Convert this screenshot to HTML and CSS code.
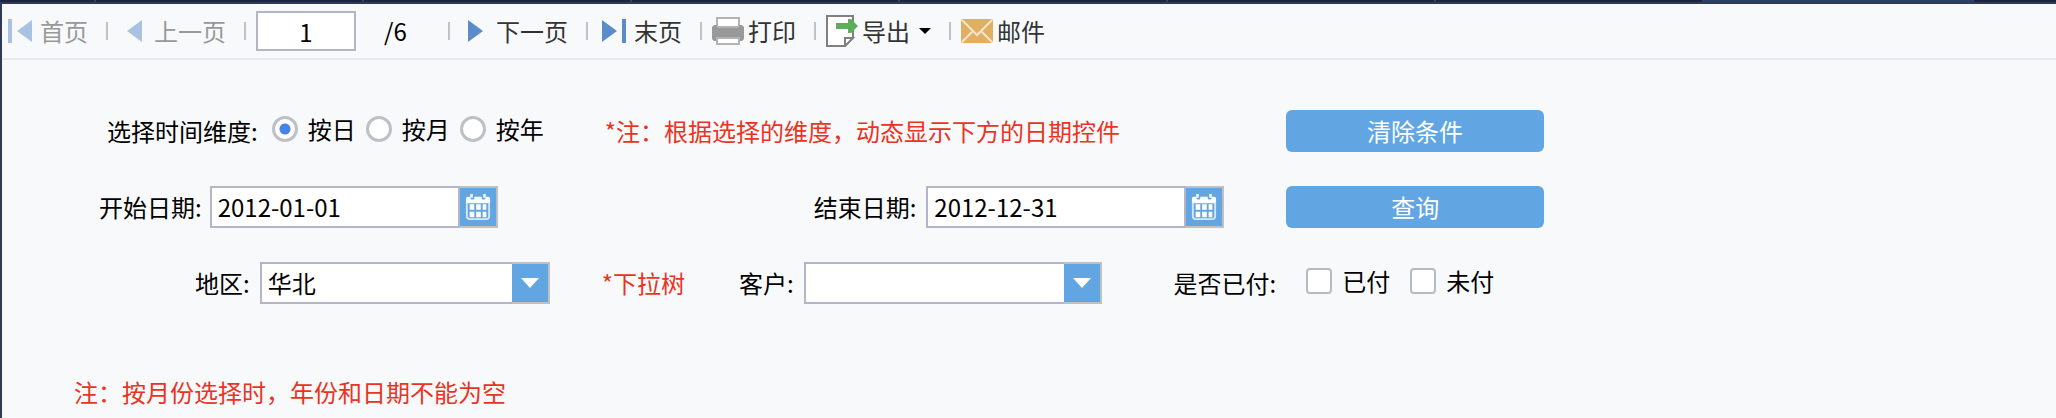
FILE: index.html
```html
<!DOCTYPE html>
<html lang="zh-CN">
<head>
  <meta charset="utf-8">
  <meta name="viewport" content="width=device-width,initial-scale=1.0">
  <title>订单查询</title>
  <link rel="stylesheet" href="styles.css">
</head>
<body>
  <div class="tabs">
    <span class="tab first"></span>
    <span class="tab"></span>
    <span class="tab"></span>
    <span class="tab"></span>
    <span class="tab"></span>
    <span class="tab"></span>
    <span class="tab"></span>
    <span class="tab active"></span>
  </div>
  <div class="report">
    <!-- toolbar -->
    <div class="toolbar">
      <button class="tool" disabled>
        <svg class="icon pale" viewBox="0 0 32 32"><path d="M4 4h4v24H4zM28 5v22L13 16z"/></svg>
        首页
      </button>
      <span class="sep"></span>
      <button class="tool" disabled>
        <svg class="icon pale" viewBox="0 0 32 32"><path d="M24 5v22L9 16z"/></svg>
        上一页
      </button>
      <span class="sep"></span>
      <input class="page" type="text" value="1" aria-label="页码">
      <span class="total">/6</span>
      <span class="sep"></span>
      <button class="tool">
        <svg class="icon blue" viewBox="0 0 32 32"><path d="M8 5v22l15-11z"/></svg>
        下一页
      </button>
      <span class="sep"></span>
      <button class="tool">
        <svg class="icon blue" viewBox="0 0 32 32"><path d="M4 5v22l15-11zM24 4h4v24h-4z"/></svg>
        末页
      </button>
      <span class="sep"></span>
      <button class="tool">
        <svg class="icon" viewBox="0 0 32 32">
          <path d="M5 3h22v9H5z" fill="#fff" stroke="#b3b3b3" stroke-width="2"/>
          <path d="M2 10h3v3h22v-3h3l2 2v12l-2 2H2l-2-2V12z" fill="#999"/>
          <path d="M5 23h22v6H5z" fill="#fff" stroke="#b3b3b3" stroke-width="2"/>
        </svg>
        打印
      </button>
      <span class="sep"></span>
      <button class="tool">
        <svg class="icon" viewBox="0 0 32 32">
          <path d="M1 1h26v21l-8 9H1z" fill="#fff" stroke="#808080" stroke-width="2"/>
          <path d="M19 31v-8h8z" fill="#fff" stroke="#808080" stroke-width="2"/>
          <path d="M10 8h12V4h3l7 7-7 7h-3v-4H10z" fill="#5dae5c"/>
        </svg>
        导出
        <svg class="caret" viewBox="0 0 12 6"><path d="M0 0h12L6 6z"/></svg>
      </button>
      <span class="sep"></span>
      <button class="tool">
        <svg class="icon" viewBox="0 0 32 32">
          <rect y="4" width="32" height="24" rx="2" fill="#e2ae62"/>
          <path d="M1 5l15 15L31 5M1 27l11-11M31 27L20 16" fill="none" stroke="#f6e5cb" stroke-width="2"/>
        </svg>
        邮件
      </button>
    </div>

    <!-- query form -->
    <form class="query">
      <div class="row unit">
        <span class="label">选择时间维度:</span>
        <div class="choices">
          <label class="choice"><input type="radio" name="unit" checked>按日</label>
          <label class="choice"><input type="radio" name="unit">按月</label>
          <label class="choice"><input type="radio" name="unit">按年</label>
        </div>
        <span class="tip">*注：根据选择的维度，动态显示下方的日期控件</span>
        <button class="btn reset" type="reset">清除条件</button>
      </div>

      <div class="row dates">
        <label class="label" for="start">开始日期:</label>
        <div class="field start">
          <input id="start" type="text" value="2012-01-01">
          <button class="pick" type="button" aria-label="选择开始日期">
            <svg viewBox="0 0 28 30">
              <path d="M3 4h3v2q2 2 4 0V4h8v2q2 2 4 0V4h3q2 0 2 2v5H1V6q0-2 2-2z" fill="#fff"/>
              <path d="M7 1v4M21 1v4" stroke="#e5f1fb" stroke-width="3"/>
              <path d="M2 10v15q0 3 3 3h18q3 0 3-3V10" fill="none" stroke="#d3e7f8" stroke-width="2"/>
              <path d="M5 12h5v6H5zM12 12h5v6h-5zM19 12h4v6h-4zM5 20h5v6H5zM12 20h5v6h-5zM19 20h4v6h-4z" fill="#fff"/>
            </svg>
          </button>
        </div>
        <label class="label" for="end">结束日期:</label>
        <div class="field end">
          <input id="end" type="text" value="2012-12-31">
          <button class="pick" type="button" aria-label="选择结束日期">
            <svg viewBox="0 0 28 30">
              <path d="M3 4h3v2q2 2 4 0V4h8v2q2 2 4 0V4h3q2 0 2 2v5H1V6q0-2 2-2z" fill="#fff"/>
              <path d="M7 1v4M21 1v4" stroke="#e5f1fb" stroke-width="3"/>
              <path d="M2 10v15q0 3 3 3h18q3 0 3-3V10" fill="none" stroke="#d3e7f8" stroke-width="2"/>
              <path d="M5 12h5v6H5zM12 12h5v6h-5zM19 12h4v6h-4zM5 20h5v6H5zM12 20h5v6h-5zM19 20h4v6h-4z" fill="#fff"/>
            </svg>
          </button>
        </div>
        <button class="btn search" type="button">查询</button>
      </div>

      <div class="row filters">
        <label class="label" for="area">地区:</label>
        <div class="field area">
          <select id="area"><option>华北</option></select>
          <span class="drop"></span>
        </div>
        <span class="tip">*下拉树</span>
        <label class="label" for="customer">客户:</label>
        <div class="field customer">
          <select id="customer"><option></option></select>
          <span class="drop"></span>
        </div>
        <span class="label paid">是否已付:</span>
        <div class="choices checks">
          <label class="choice"><input type="checkbox">已付</label>
          <label class="choice"><input type="checkbox">未付</label>
        </div>
      </div>

      <p class="tip note">注：按月份选择时，年份和日期不能为空</p>
    </form>
  </div>
</body>
</html>
```
FILE: styles.css
```css
* {
  box-sizing: border-box;
}
body {
  margin: 0;
  min-height: 100vh;
  display: flex;
  flex-direction: column;
  background: #f7f9fb;
  color: #000;
  font: 24px/36px "Noto Sans CJK SC", sans-serif;
}
button, input, select {
  font: inherit;
  color: inherit;
  margin: 0;
}

/* bottom edge of the tab strip */
.tabs {
  display: flex;
  height: 4px;
  background: #1b2440;
  border-bottom: 2px solid #2e3a56;
  overflow: hidden;
}
.tab {
  flex: none;
  width: 268px;
  border-right: 2px solid #36415c;
}
.tab.first {
  width: 96px;
}
.tab.active {
  width: 270px;
  background: #2a3f68;
}

.report {
  flex: 1;
  border-left: 2px solid #2e3a56;
}

.toolbar {
  display: flex;
  align-items: center;
  padding: 7px 2px;
  border-bottom: 2px solid #e8eaed;
}
.tool {
  display: flex;
  align-items: center;
  gap: 4px;
  padding: 0;
  border: 0;
  background: none;
  color: #333;
  white-space: nowrap;
}
.tool:disabled {
  color: #999;
}
.icon {
  width: 32px;
  height: 32px;
}
.pale {
  fill: #aac2e2;
}
.blue {
  fill: #5b8cc9;
}
.caret {
  width: 12px;
  height: 6px;
  margin-left: 5px;
}
.sep {
  width: 2px;
  height: 18px;
  margin: 0 10px 0 18px;
  background: #c0c2c5;
}
.page {
  width: 100px;
  height: 40px;
  padding: 0;
  border: 2px solid #b5b5c9;
  background: #fff;
  text-align: center;
}
.total {
  width: 46px;
  margin-left: 28px;
}

.query {
  display: flex;
  flex-direction: column;
  gap: 34px;
  padding-top: 50px;
}
.row {
  display: flex;
  align-items: center;
  height: 42px;
  white-space: nowrap;
}
.unit {
  padding-left: 105px;
}
.dates {
  padding-left: 97px;
}
.filters {
  padding-left: 193px;
}
.tip {
  color: #ea3323;
}

.choices {
  display: flex;
  gap: 10px;
  margin-left: 14px;
  padding-bottom: 4px;
}
.checks {
  gap: 20px;
  margin-left: 30px;
}
.choice {
  display: flex;
  align-items: center;
  gap: 10px;
}
.choice input {
  appearance: none;
  width: 26px;
  height: 26px;
  border: 2px solid #b4bbc2;
  border-radius: 4px;
  background: #fff;
}
.choice input[type=radio] {
  border-width: 3px;
  border-color: #bcc1c6;
  border-radius: 50%;
}
.choice input[type=radio]:checked {
  background: radial-gradient(circle, #4682e8 5px, #fff 6px);
}
.choices + .tip {
  margin-left: 61px;
}

.btn {
  width: 258px;
  height: 42px;
  padding: 0;
  border: 0;
  border-radius: 6px;
  background: #61a6e2;
  color: #fff;
}
.reset {
  margin-left: 166px;
}
.search {
  margin-left: 62px;
}

.field {
  display: flex;
  position: relative;
  height: 42px;
  margin-left: 10px;
}
.field input, .field select {
  flex: 1;
  min-width: 0;
  padding: 0 6px;
  border: 2px solid #b5b5c9;
  border-radius: 0;
  background: #fff;
}
.field select {
  appearance: none;
}
.start {
  width: 288px;
  margin-left: 8px;
}
.start + .label {
  margin-left: 316px;
}
.end {
  width: 298px;
}
.area {
  width: 290px;
}
.area + .tip {
  margin-left: 52px;
}
.tip + .label {
  margin-left: 54px;
}
.customer {
  width: 298px;
}
.paid {
  margin-left: 72px;
}
.pick, .drop {
  display: flex;
  align-items: center;
  justify-content: center;
  width: 38px;
  padding: 0;
  border: 2px solid #c0c0c0;
  border-left: 0;
  background: #61a6e2;
}
.pick svg {
  width: 26px;
  height: 28px;
}
.drop {
  position: absolute;
  top: 0;
  right: 0;
  bottom: 0;
  pointer-events: none;
}
.drop::before {
  content: "";
  border: 9px solid transparent;
  border-top: 10px solid #fff;
  border-bottom: 0;
}

.note {
  margin: 36px 0 0 72px;
}
```
